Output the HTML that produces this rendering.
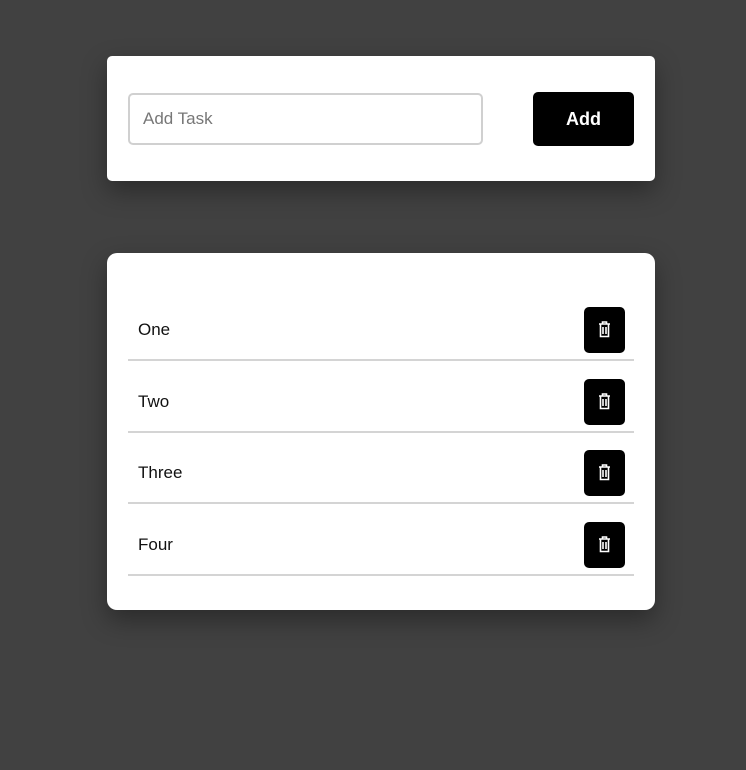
<!DOCTYPE html>
<html><head><style>
body{margin:0;width:746px;height:770px;background:#414141;font-family:"Liberation Sans",sans-serif;position:relative;overflow:hidden}
.card{position:absolute;left:107px;width:548px;background:#fff;box-shadow:0 10px 25px rgba(0,0,0,.35)}
.c1{top:56px;height:125px;border-radius:5px}
.c2{top:253px;height:357px;border-radius:10px}
.inp{position:absolute;left:21px;top:37px;width:338px;height:48px;border:2px solid #d0d0d0;border-radius:5px;font-size:17px;color:#777;line-height:48px;padding-left:13px;box-sizing:content-box}
.add{position:absolute;left:426px;top:36px;width:101px;height:54px;background:#000;border-radius:5px;color:#fff;font-size:18px;font-weight:bold;text-align:center;line-height:54px}
.row{position:absolute;left:21px;width:506px;height:71px;border-bottom:2px solid #d4d4d4}
.row span{position:absolute;left:10px;top:32px;font-size:17px;color:#111}
.del{position:absolute;left:456px;top:2px;width:41px;height:46px;background:#000;border-radius:5px}
.del svg{position:absolute;left:14px;top:14px}
</style></head><body>
<div class="card c1"><div class="inp">Add Task</div><div class="add">Add</div></div>
<div class="card c2">
<div class="row" style="top:35px"><span>One</span><div class="del" style="top:19px"><svg width="13" height="17" viewBox="0 0 13 17"><path d="M1 3h11M4.5 3V1h4v2M2.5 3.5v12h8v-12M5 6v7M8 6v7" stroke="#fff" stroke-width="1.6" fill="none"/></svg></div></div>
<div class="row" style="top:107px"><span>Two</span><div class="del" style="top:19px"><svg width="13" height="17" viewBox="0 0 13 17"><path d="M1 3h11M4.5 3V1h4v2M2.5 3.5v12h8v-12M5 6v7M8 6v7" stroke="#fff" stroke-width="1.6" fill="none"/></svg></div></div>
<div class="row" style="top:178px"><span>Three</span><div class="del" style="top:19px"><svg width="13" height="17" viewBox="0 0 13 17"><path d="M1 3h11M4.5 3V1h4v2M2.5 3.5v12h8v-12M5 6v7M8 6v7" stroke="#fff" stroke-width="1.6" fill="none"/></svg></div></div>
<div class="row" style="top:250px"><span>Four</span><div class="del" style="top:19px"><svg width="13" height="17" viewBox="0 0 13 17"><path d="M1 3h11M4.5 3V1h4v2M2.5 3.5v12h8v-12M5 6v7M8 6v7" stroke="#fff" stroke-width="1.6" fill="none"/></svg></div></div>
</div>
</body></html>
